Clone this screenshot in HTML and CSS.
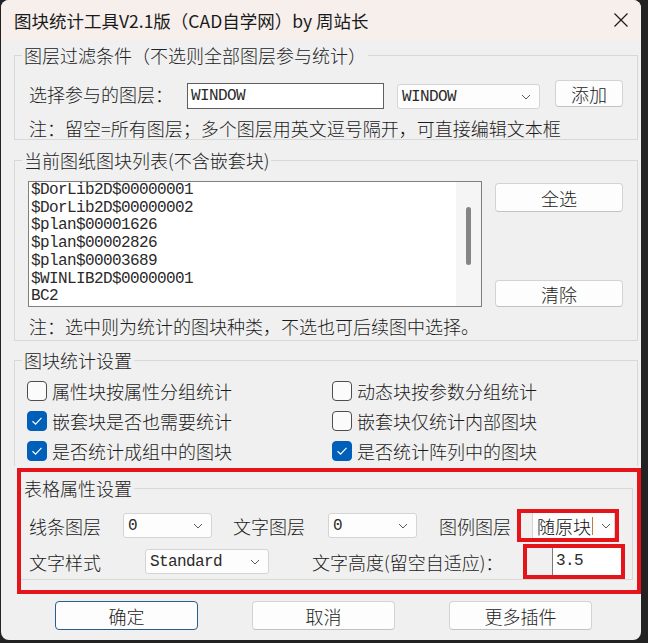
FILE: index.html
```html
<!DOCTYPE html>
<html lang="zh-CN">
<head>
    <meta charset="UTF-8">
    <meta name="viewport" content="width=device-width, initial-scale=1.0">
    <title>图块统计工具V2.1版</title>
    <link rel="stylesheet" href="styles.css">
</head>
<body>
    <div class="window">
        <div class="titlebar">
            <span class="title">图块统计工具V2.1版（CAD自学网）by 周站长</span>
            <svg class="close" width="16" height="16" viewBox="0 0 16 16">
                <path d="M1.5 1.5L14.5 14.5M14.5 1.5L1.5 14.5" stroke="#1a1a1a" stroke-width="1.2" fill="none"/>
            </svg>
        </div>

        <!-- layer filter -->
        <fieldset class="group group-filter">
            <legend>图层过滤条件（不选则全部图层参与统计）</legend>
            <div class="filter-row">
                <span class="label">选择参与的图层：</span>
                <div class="textbox mono">WINDOW</div>
                <div class="combo combo-layer">
                    <span class="mono">WINDOW</span>
                    <svg class="chev" width="10" height="6" viewBox="0 0 10 6"><path d="M1 1L5 5L9 1" stroke="#5a5a5a" fill="none"/></svg>
                </div>
                <button class="btn btn-add">添加</button>
            </div>
            <p class="note">注：留空=所有图层；多个图层用英文逗号隔开，可直接编辑文本框</p>
        </fieldset>

        <!-- block list -->
        <fieldset class="group group-blocks">
            <legend>当前图纸图块列表(不含嵌套块)</legend>
            <div class="block-row">
                <div class="listbox">
                    <div class="items mono">
                        <div class="item">$DorLib2D$00000001</div>
                        <div class="item">$DorLib2D$00000002</div>
                        <div class="item">$plan$00001626</div>
                        <div class="item">$plan$00002826</div>
                        <div class="item">$plan$00003689</div>
                        <div class="item">$WINLIB2D$00000001</div>
                        <div class="item">BC2</div>
                    </div>
                    <div class="scroll"><div class="thumb"></div></div>
                </div>
                <div class="side-btns">
                    <button class="btn btn-all">全选</button>
                    <button class="btn btn-clear">清除</button>
                </div>
            </div>
            <p class="note">注：选中则为统计的图块种类，不选也可后续图中选择。</p>
        </fieldset>

        <!-- options -->
        <fieldset class="group group-options">
            <legend>图块统计设置</legend>
            <div class="checks">
                <label class="check"><span class="box"></span>属性块按属性分组统计</label>
                <label class="check"><span class="box"></span>动态块按参数分组统计</label>
                <label class="check"><span class="box on"><svg width="12" height="10" viewBox="0 0 12 10"><path d="M1.5 5.2L4.6 8.2L10.5 1.8" stroke="#fff" stroke-width="1.2" fill="none"/></svg></span>嵌套块是否也需要统计</label>
                <label class="check"><span class="box"></span>嵌套块仅统计内部图块</label>
                <label class="check"><span class="box on"><svg width="12" height="10" viewBox="0 0 12 10"><path d="M1.5 5.2L4.6 8.2L10.5 1.8" stroke="#fff" stroke-width="1.2" fill="none"/></svg></span>是否统计成组中的图块</label>
                <label class="check"><span class="box on"><svg width="12" height="10" viewBox="0 0 12 10"><path d="M1.5 5.2L4.6 8.2L10.5 1.8" stroke="#fff" stroke-width="1.2" fill="none"/></svg></span>是否统计阵列中的图块</label>
            </div>
        </fieldset>

        <!-- table settings, marked in red -->
        <div class="mark mark-table">
            <fieldset class="group group-table">
                <legend>表格属性设置</legend>
                <div class="table-row row-one">
                    <span class="lbl lbl-line">线条图层</span>
                    <div class="combo combo-small combo-line">
                        <span class="mono">0</span>
                        <svg class="chev" width="10" height="6" viewBox="0 0 10 6"><path d="M1 1L5 5L9 1" stroke="#5a5a5a" fill="none"/></svg>
                    </div>
                    <span class="lbl lbl-text">文字图层</span>
                    <div class="combo combo-small combo-text">
                        <span class="mono">0</span>
                        <svg class="chev" width="10" height="6" viewBox="0 0 10 6"><path d="M1 1L5 5L9 1" stroke="#5a5a5a" fill="none"/></svg>
                    </div>
                    <span class="lbl lbl-legend">图例图层</span>
                    <div class="mark mark-legend">
                        <div class="combo combo-legend">
                            <span class="cjk-val">随原块</span><span class="caret"></span>
                            <svg class="chev" width="10" height="6" viewBox="0 0 10 6"><path d="M1 1L5 5L9 1" stroke="#5a5a5a" fill="none"/></svg>
                        </div>
                    </div>
                </div>
                <div class="table-row row-two">
                    <span class="lbl lbl-style">文字样式</span>
                    <div class="combo combo-style">
                        <span class="mono">Standard</span>
                        <svg class="chev" width="10" height="6" viewBox="0 0 10 6"><path d="M1 1L5 5L9 1" stroke="#5a5a5a" fill="none"/></svg>
                    </div>
                    <span class="lbl lbl-height">文字高度(留空自适应)：</span>
                    <div class="mark mark-height">
                        <div class="height-input mono">3.5</div>
                    </div>
                </div>
            </fieldset>
        </div>

        <div class="actions">
            <button class="btn btn-main btn-ok">确定</button>
            <button class="btn btn-main">取消</button>
            <button class="btn btn-main">更多插件</button>
        </div>
    </div>
</body>
</html>
```

FILE: styles.css
```css
body {
    margin: 0;
    background-color: #222;
    font-family: "Noto Sans CJK SC", sans-serif;
    font-size: 18px;
    font-weight: 300;
    color: #1b1b1b;
}

.mono {
    font-family: "Liberation Mono", monospace;
    font-size: 16px;
    letter-spacing: -0.6px;
    font-weight: 400;
    color: #2a2a2a;
}

.window {
    width: 640px;
    height: 640px;
    margin-left: 1px;
    background-color: #f0f0f0;
    border-radius: 8px;
    overflow: hidden;
}

.titlebar {
    height: 40px;
    background-color: #f6efec;
    display: flex;
    align-items: center;
    padding: 0 12px 0 13px;
}

.title {
    font-size: 17.5px;
    font-weight: 400;
    color: #1a1a1a;
}

.close {
    margin-left: auto;
}

/* group boxes */
.group {
    border: 1px solid #d8d8d8;
    margin: 0 0 0 13px;
    width: 624px;
    box-sizing: border-box;
    padding: 0 0 0 7px;
    min-width: 0;
}

.group legend {
    padding: 0 2px;
    line-height: 22px;
    color: #222;
}

.group-filter {
    margin-top: 4px;
}

.filter-row {
    display: flex;
    height: 29px;
    margin-top: 14px;
}

.label {
    width: 158px;
    margin-left: 7px;
    line-height: 29px;
}

.textbox {
    width: 197px;
    height: 26px;
    align-self: flex-end;
    box-sizing: border-box;
    border: 1px solid #5f5f5f;
    background: #fff;
    padding-left: 3px;
    line-height: 24px;
}

.combo {
    display: flex;
    align-items: center;
    justify-content: space-between;
    box-sizing: border-box;
    background: #fdfdfd;
    border: 1px solid #d4d4d4;
    border-radius: 3px;
    padding: 0 8px 0 4px;
    flex: none;
}

.combo-layer {
    width: 143px;
    height: 25px;
    margin-left: 13px;
    align-self: flex-end;
}

.btn {
    font-family: inherit;
    font-size: 18px;
    font-weight: 300;
    color: #1b1b1b;
    background: #fdfdfd;
    border: 1px solid #d3d3d3;
    border-bottom-color: #c2c2c2;
    border-radius: 4px;
    padding: 0;
    line-height: 1;
}

.btn-add {
    width: 68px;
    height: 27px;
    margin-left: 15px;
}

.note {
    margin: 8px 0 0 7px;
    line-height: 22px;
}

/* block list */
.group-blocks {
    margin-top: 9px;
    padding-bottom: 3px;
}

.block-row {
    display: flex;
    margin-top: 10px;
}

.listbox {
    width: 454px;
    height: 126px;
    margin-left: 6px;
    box-sizing: border-box;
    border: 1px solid #7f7f7f;
    background: #fff;
    display: flex;
}

.items {
    flex: 1;
    padding-left: 2px;
    overflow: hidden;
}

.item {
    line-height: 17.7px;
}

.scroll {
    width: 25px;
    background: #f5f5f5;
}

.thumb {
    width: 5px;
    height: 58px;
    margin: 25px 0 0 10px;
    background: #858585;
    border-radius: 3px;
}

.side-btns {
    display: flex;
    flex-direction: column;
    justify-content: space-between;
    margin-left: 13px;
    width: 128px;
    padding-top: 2px;
}

.btn-all {
    height: 29px;
}

.btn-clear {
    height: 27px;
}

/* checkboxes */
.group-options {
    margin-top: 8px;
    border-bottom: none;
}

.checks {
    display: grid;
    grid-template-columns: 305px auto;
    margin: 5px 0 0 5px;
}

.check {
    display: flex;
    align-items: center;
    height: 30px;
}

.box {
    width: 20px;
    height: 20px;
    box-sizing: border-box;
    border: 1px solid #4d4d4d;
    border-radius: 4px;
    background: #fbfbfb;
    margin-right: 5px;
    display: flex;
    align-items: center;
    justify-content: center;
}

.box.on {
    background: #005fb8;
    border-color: #005fb8;
}

/* red annotation frames */
.mark {
    border: 4px solid #e5141b;
    box-sizing: border-box;
}

.mark-table {
    margin: 2px 0 0 16px;
    width: 624px;
    height: 126px;
}

.group-table {
    width: auto;
    margin: 5px 4px 0 0;
    border-left: none;
    padding-left: 1px;
}

.table-row {
    display: flex;
    align-items: center;
}

.row-one {
    height: 33px;
    margin-top: 10px;
}

.row-two {
    height: 35px;
    margin-top: 2px;
}

.lbl {
    flex: none;
    width: 72px;
}

.lbl-line,
.lbl-style {
    margin-left: 7px;
}

.combo-small {
    width: 89px;
    height: 25px;
}

.combo-line {
    margin-left: 22px;
}

.lbl-text {
    margin-left: 21px;
}

.combo-text {
    margin-left: 23px;
}

.lbl-legend {
    margin-left: 22px;
}

.mark-legend {
    width: 102px;
    height: 33px;
    margin-left: 6px;
    padding-left: 11px;
    display: flex;
    overflow: hidden;
    flex: none;
}

.combo-legend {
    width: 83px;
    height: 100%;
    border-radius: 0;
    border-top: none;
    border-bottom: none;
    padding: 0 3px 0 4px;
    justify-content: flex-start;
}

.cjk-val {
    color: #111;
}

.caret {
    width: 0;
    height: 18px;
    border-left: 1px solid #c07a44;
    margin-left: 1px;
}

.combo-legend .chev {
    margin-left: auto;
}

.combo-style {
    width: 124px;
    height: 25px;
    margin-left: 44px;
}

.lbl-height {
    width: 211px;
    margin-left: 43px;
}

.mark-height {
    width: 102px;
    height: 35px;
    padding-left: 25px;
    display: flex;
    flex: none;
}

.height-input {
    flex: 1;
    background: #fff;
    border-left: 1px solid #7a7a7a;
    padding-left: 3px;
    line-height: 27px;
}

/* bottom buttons */
.actions {
    display: flex;
    gap: 54px;
    margin: 7px 0 0 54px;
}

.btn-main {
    width: 143px;
    height: 29px;
}

.btn-ok {
    border: 1px solid #2a5d87;
}
```
